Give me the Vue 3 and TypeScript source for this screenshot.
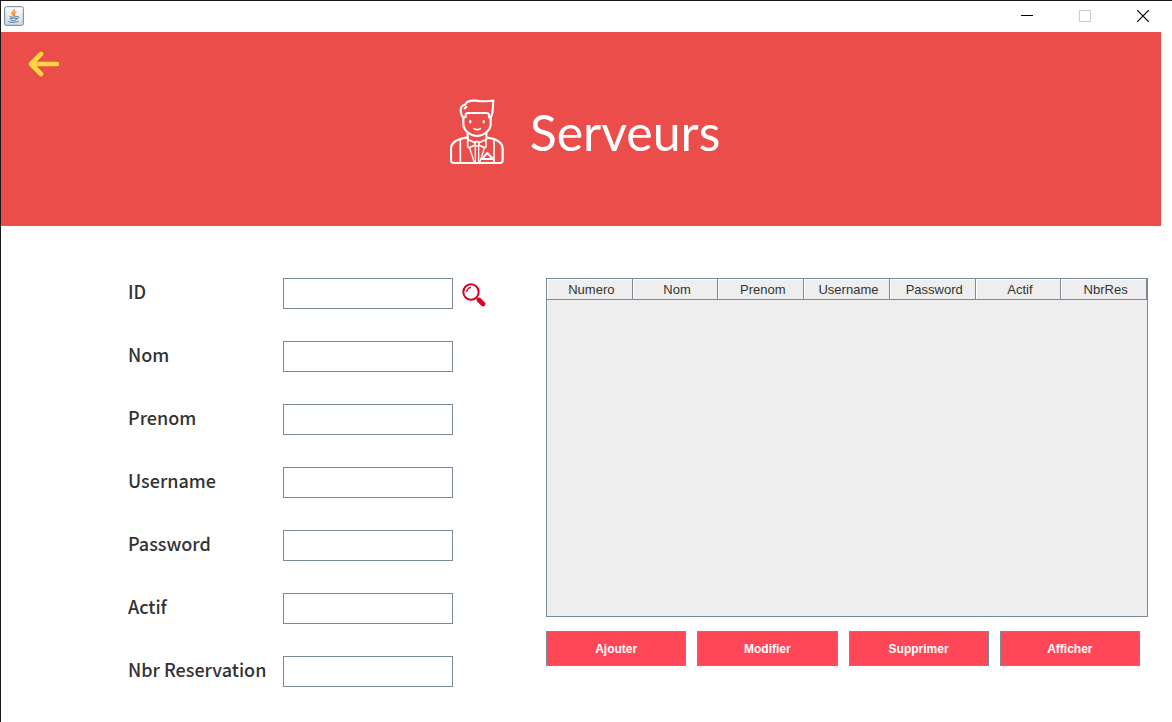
<script setup lang="ts">
import { reactive } from 'vue'

interface Field {
  id: string
  label: string
  searchable?: boolean
}

const fields: Field[] = [
  { id: 'id', label: 'ID', searchable: true },
  { id: 'nom', label: 'Nom' },
  { id: 'prenom', label: 'Prenom' },
  { id: 'username', label: 'Username' },
  { id: 'password', label: 'Password' },
  { id: 'actif', label: 'Actif' },
  { id: 'reservations', label: 'Nbr Reservation' },
]

const columns: string[] = ['Numero', 'Nom', 'Prenom', 'Username', 'Password', 'Actif', 'NbrRes']
const actions: string[] = ['Ajouter', 'Modifier', 'Supprimer', 'Afficher']

const values = reactive<Record<string, string>>(
  Object.fromEntries(fields.map((f) => [f.id, ''])),
)
</script>

<template>
  <div class="window">
    <div class="titlebar">
      <svg class="app-icon" width="20" height="20" viewBox="0 0 60 60" aria-hidden="true">
        <defs>
          <linearGradient id="tile" x1="0" y1="0" x2="0" y2="1">
            <stop offset="0" stop-color="#ffffff" />
            <stop offset="1" stop-color="#cfd9e2" />
          </linearGradient>
        </defs>
        <rect x="2" y="2" width="56" height="56" rx="5" fill="url(#tile)" stroke="#6f8494" stroke-width="3" />
        <path d="M31 9c3 6-8 8-7 13 0 4 5 4 4 8M37 17c-6 3-9 5-6 8 2 3 0 4-2 6" fill="none" stroke="#ee8a2c" stroke-width="4" />
        <path d="M17 32q10 3 22 0M18 36q11 3 20 0l-3 7q-7 3-13 0zM39 32c8-2 8 5-1 7M13 47q14 6 31-1" fill="none" stroke="#5c87a6" stroke-width="3" />
      </svg>
      <div class="controls">
        <button type="button" class="control" aria-label="Minimize">
          <svg width="12" height="12" viewBox="0 0 12 12"><path d="M0 5.500h12" stroke="#000" /></svg>
        </button>
        <button type="button" class="control" aria-label="Maximize" disabled>
          <svg width="12" height="12" viewBox="0 0 12 12"><rect x=".5" y=".5" width="11" height="11" fill="none" stroke="#ccc" /></svg>
        </button>
        <button type="button" class="control" aria-label="Close">
          <svg width="12" height="12" viewBox="0 0 12 12"><path d="M0 0l12 12M12 0L0 12" stroke="#000" stroke-width="1.200" /></svg>
        </button>
      </div>
    </div>

    <header class="banner">
      <button type="button" class="back" aria-label="Retour">
        <svg width="32" height="28" viewBox="0 0 32 28">
          <path d="M30 14H4M14 4L4 14l10 10" fill="none" stroke="#ffd740" stroke-width="4.600" stroke-linecap="round" stroke-linejoin="round" />
        </svg>
      </button>
      <div class="brand">
        <svg width="54" height="66" viewBox="60 27 162 198" fill="none" stroke="#fff" stroke-width="6.500" stroke-linecap="round" stroke-linejoin="round" aria-hidden="true">
          <path d="M100 83C92 76 90 57 95 50Q98 45 105 45C108 34 122 31 137 32C158 36 173 33 190 32C188 46 191 70 182 83L177 82V74Q176 69 169 69H116Q107 69 107 75V81L100 83" />
          <path d="M104 55L109 51" />
          <path d="M100 83V103C101 122 121 138 141 138S181 122 182 103V83" />
          <path d="M121 93V97M161 93V97" />
          <path d="M132 116Q141 122 151 116" stroke-width="5" />
          <path d="M113 130V148M169 130V148" />
          <path d="M112 143Q63 149 63 177V211Q63 219 72 219H210Q218 219 218 211V177Q218 149 170 143" />
          <path d="M91 151V218M192 151V218" stroke-width="5" />
          <path d="M135 158L119 151Q113 150 113 157V169Q114 175 120 172L135 166M147 158L162 151Q168 150 168 157V169Q167 175 161 172L147 166" stroke-width="5" />
          <rect x="135" y="155" width="12" height="13" rx="3" stroke-width="5" />
          <path d="M119 174L133 218M163 174L149 218M136 170V218M146 170V218" stroke-width="4" />
          <path d="M153 207H188M158 204L172 189L186 204" stroke-width="6" />
        </svg>
        <h1>Serveurs</h1>
      </div>
    </header>

    <main class="content">
      <form class="form" @submit.prevent>
        <div v-for="field in fields" :key="field.id" class="row">
          <label :for="field.id">{{ field.label }}</label>
          <input :id="field.id" v-model="values[field.id]" type="text" class="box" autocomplete="off" />
          <button v-if="field.searchable" type="button" class="search" aria-label="Rechercher">
            <svg width="24" height="24" viewBox="0 0 72 72" fill="none" stroke="#d80027">
              <circle cx="27" cy="27" r="23" stroke-width="6" />
              <path d="M14 27Q15 15 27 13" stroke-width="4" />
              <path d="M44 44L50 50" stroke-width="4" />
              <path d="M51 51L63 63" stroke-width="14" stroke-linecap="round" />
            </svg>
          </button>
        </div>
      </form>

      <section class="panel">
        <div class="pane">
          <table>
            <thead>
              <tr>
                <th v-for="column in columns" :key="column" scope="col">{{ column }}</th>
              </tr>
            </thead>
          </table>
        </div>
        <div class="actions">
          <button v-for="action in actions" :key="action" type="button" class="action">{{ action }}</button>
        </div>
      </section>
    </main>
  </div>
</template>

<style>
body {
  background: #fff;
}
</style>

<style scoped>
.window {
  box-sizing: border-box;
  min-height: 100vh;
  border-top: 1px solid #1c171b;
  border-left: 1px solid #1c171b;
  background: #fff;
  font-family: "Liberation Sans", Arial, sans-serif;
  color: #333;
}

button {
  cursor: pointer;
  font: inherit;
}

svg {
  display: block;
}

.titlebar {
  display: flex;
  align-items: center;
  justify-content: space-between;
  box-sizing: border-box;
  height: 31px;
  padding: 0 0 2px 3px;
}

.controls {
  display: flex;
}

.control {
  display: flex;
  align-items: center;
  justify-content: center;
  width: 58px;
  height: 28px;
  padding: 0;
  border: 0;
  background: none;
}

.banner {
  display: grid;
  grid-template-columns: 1fr auto 1fr;
  box-sizing: border-box;
  min-height: 194px;
  margin-right: 11px;
  background: #eb4d4b;
}

.back {
  justify-self: start;
  align-self: start;
  margin: 18px 0 0 26px;
  padding: 0;
  border: 0;
  background: none;
}

.brand {
  display: flex;
  align-items: center;
  gap: 26px;
  padding: 6px 0 0 8px;
}

h1 {
  margin: 0;
  color: #fff;
  font-family: Lato, sans-serif;
  font-size: 50px;
  line-height: 62px;
  font-weight: 400;
}

.content {
  display: flex;
  align-items: flex-start;
  gap: 69px;
  padding: 52px 24px 35px 127px;
}

.form {
  display: flex;
  flex-direction: column;
  gap: 32px;
}

.row {
  display: grid;
  grid-template-columns: 155px 170px 24px;
  align-items: center;
  height: 31px;
}

label {
  padding-bottom: 5px;
  font-family: "Noto Sans CJK SC", sans-serif;
  font-size: 18px;
  line-height: 24px;
  font-weight: 500;
  white-space: nowrap;
}

.box {
  box-sizing: border-box;
  width: 170px;
  height: 31px;
  padding: 2px 6px;
  border: 1px solid #7a8a99;
  border-radius: 0;
  outline: 0;
  background: #fff;
  font: 13px "Liberation Sans", Arial, sans-serif;
}

.search {
  margin-left: 9px;
  padding: 2px 0 0;
  border: 0;
  background: none;
}

.panel {
  flex: 1;
  min-width: 0;
}

.pane {
  box-sizing: border-box;
  min-height: 339px;
  border: 1px solid #7a8a99;
  background: #eee;
}

table {
  width: 100%;
  table-layout: fixed;
  border-collapse: separate;
  border-spacing: 0;
}

th {
  box-sizing: border-box;
  height: 20px;
  padding: 1px 0 0 4px;
  border-right: 1px solid #7a8a99;
  border-bottom: 1px solid #7a8a99;
  box-shadow: inset 1px 1px #fff;
  font-size: 13px;
  line-height: 19px;
  font-weight: 400;
}

.actions {
  display: grid;
  grid-template-columns: repeat(4, 1fr);
  gap: 11px;
  margin: 14px 8px 0 0;
}

.action {
  height: 35px;
  padding: 0;
  border: 1px solid #7a8a99;
  background: #ff4757;
  color: #fff;
  font-size: 12px;
  font-weight: 700;
}
</style>
